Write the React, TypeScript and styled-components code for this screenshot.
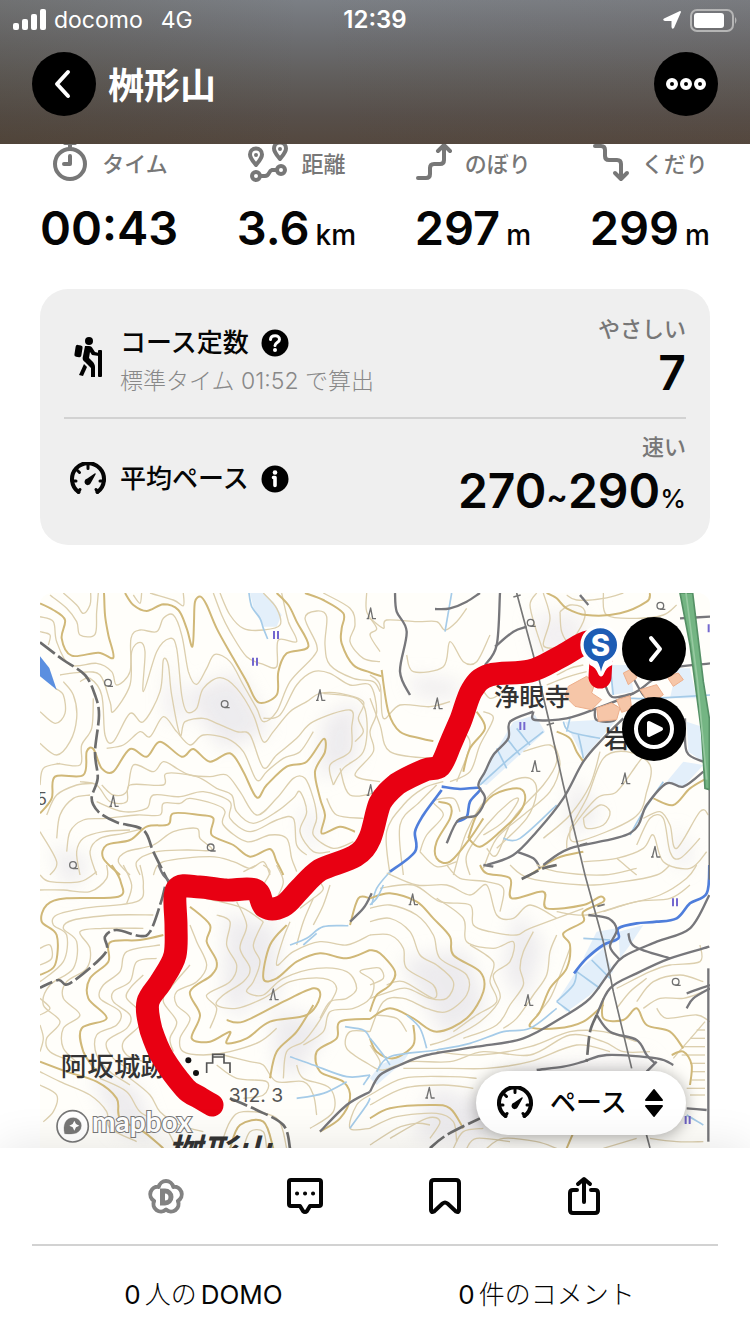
import React from "react";
import styled, { createGlobalStyle } from "styled-components";

const GlobalStyle = createGlobalStyle`
  *, *::before, *::after { box-sizing: border-box; }
  body {
    margin: 0;
    background: #fff;
    color: #050505;
    font-family: Inter, "Noto Sans CJK JP", sans-serif;
  }
  button, select { font: inherit; color: inherit; border: 0; padding: 0; background: none; cursor: pointer; }
  h1, h2, p, dl, dt, dd { margin: 0; font-weight: inherit; }
  svg { display: block; flex: none; }
`;

const Screen = styled.div`
  min-height: 100vh;
  display: flex;
  flex-direction: column;
`;

/* ---------- header ---------- */

const Header = styled.header`
  flex: none;
  height: 144px;
  color: #fff;
  background:
    linear-gradient(90deg, rgba(62, 50, 30, 0.18), rgba(80, 80, 80, 0) 40%, rgba(90, 60, 40, 0.06)),
    linear-gradient(180deg, #7b7f85 0%, #6c6d70 28%, #605d5b 55%, #574f4a 80%, #54483f 100%);
`;

const StatusBar = styled.div`
  height: 40px;
  padding: 0 12px;
  display: grid;
  grid-template-columns: 1fr auto 1fr;
  align-items: center;
  font-size: 23px;
  line-height: 40px;
`;

const StatusGroup = styled.div<{ $end?: boolean }>`
  display: flex;
  align-items: center;
  gap: 8px;
  justify-content: ${(p) => (p.$end ? "flex-end" : "flex-start")};
`;

const Network = styled.span`
  margin-left: 10px;
`;

const Clock = styled.span`
  font-size: 24px;
  font-weight: 600;
`;

const NavBar = styled.nav`
  padding: 12px 32px 0;
  display: flex;
  align-items: center;
  gap: 12px;
`;

const Title = styled.h1`
  flex: 1;
  padding-top: 4px;
  font-size: 36px;
  line-height: 60px;
  font-weight: 700;
`;

const RoundButton = styled.button`
  width: 64px;
  height: 64px;
  flex: none;
  display: grid;
  place-items: center;
  border-radius: 50%;
  background: #000;
  color: #fff;
`;

/* ---------- statistics ---------- */

const Main = styled.main`
  flex: 1;
  padding: 0 40px;
  overflow: hidden;
`;

const Stats = styled.dl`
  display: flex;
  justify-content: space-between;
`;

const Stat = styled.div`
  display: flex;
  flex-direction: column;
  align-items: center;
`;

const StatLabel = styled.dt`
  display: flex;
  align-items: center;
  gap: 12px;
  height: 36px;
  color: #777;
  font-size: 22px;
  font-weight: 500;
`;

const StatValue = styled.dd`
  margin-top: 20px;
  font-size: 47px;
  line-height: 56px;
  font-weight: 600;
  white-space: nowrap;
`;

const Unit = styled.span`
  margin-left: 6px;
  font-size: 28px;
  font-weight: 500;
`;

const Small = styled.span`
  font-size: 26px;
  font-weight: 500;
`;

const Tilde = styled.span`
  font-size: 32px;
`;

/* ---------- course card ---------- */

const Card = styled.section`
  margin-top: 26px;
  padding: 0 24px;
  border-radius: 28px;
  background: #efefef;
`;

const CardRow = styled.div`
  height: 128px;
  padding-top: 8px;
  display: flex;
  align-items: center;
  gap: 8px;

  & + & {
    padding: 0 0 6px;
    border-top: 2px solid #d2d2d2;
  }
`;

const CardIcon = styled.div`
  width: 48px;
  display: grid;
  place-items: center;
`;

const CardText = styled.div<{ $noted?: boolean }>`
  flex: 1;
  padding-top: ${(p) => (p.$noted ? "8px" : 0)};
`;

const CardTitle = styled.h2`
  display: flex;
  align-items: center;
  gap: 12px;
  font-size: 26px;
  line-height: 40px;
  font-weight: 500;
`;

const Note = styled.p`
  color: #888;
  font-size: 23px;
  line-height: 36px;
  font-weight: 300;
`;

const Result = styled.div`
  text-align: right;
`;

const Grade = styled.p`
  color: #777;
  font-size: 22px;
  line-height: 32px;
  font-weight: 500;
`;

const ResultValue = styled.p`
  font-size: 48px;
  line-height: 56px;
  font-weight: 600;
`;

/* ---------- map ---------- */

const MapPanel = styled.section`
  position: relative;
  margin-top: 48px;
  border-radius: 12px 12px 0 0;
  overflow: hidden;
`;

const MapArt = styled.svg`
  width: 100%;
  height: auto;
`;

const MapControls = styled.div`
  position: absolute;
  top: 24px;
  right: 24px;
  display: grid;
  gap: 16px;
`;

const PacePicker = styled.label`
  position: absolute;
  right: 24px;
  bottom: 13px;
  height: 64px;
  padding: 0 22px 0 20px;
  display: flex;
  align-items: center;
  gap: 16px;
  border-radius: 32px;
  background: #fff;
  box-shadow: 0 2px 16px rgba(0, 0, 0, 0.35);
  font-size: 26px;
  font-weight: 500;
`;

const PaceSelect = styled.select`
  appearance: none;
  width: 78px;
  line-height: 40px;
`;

/* ---------- footer ---------- */

const Footer = styled.footer`
  position: relative;
  padding: 0 32px;
  background: #fff;
  box-shadow: 0 -4px 40px rgba(0, 0, 0, 0.09);
`;

const Actions = styled.div`
  height: 96px;
  padding: 0 64px;
  display: grid;
  grid-template-columns: repeat(4, 1fr);
  justify-items: center;
  align-items: center;
`;

const ActionButton = styled.button`
  display: grid;
  place-items: center;
  width: 64px;
  height: 64px;
`;

const Counts = styled.div`
  height: 90px;
  padding-top: 10px;
  display: grid;
  grid-template-columns: 1fr 1fr;
  align-items: center;
  border-top: 2px solid #d2d2d2;
`;

const CountLink = styled.a`
  display: flex;
  justify-content: center;
  gap: 4px;
  color: inherit;
  font-size: 26px;
  line-height: 40px;
  text-decoration: none;
`;

const Japanese = styled.span`
  font-weight: 300;
`;

/* ---------- icons ---------- */

const line = {
  fill: "none",
  stroke: "currentColor",
  strokeLinecap: "round" as const,
  strokeLinejoin: "round" as const,
};

const StopwatchIcon = () => (
  <svg width="40" height="40" viewBox="0 0 40 40" {...line} strokeWidth="4">
    <circle cx="20" cy="22" r="15" />
    <path d="M20 14v8h-6M20 7V3M15 1h10" />
  </svg>
);

const DistanceIcon = () => (
  <svg width="42" height="40" viewBox="0 0 42 40" {...line} strokeWidth="4">
    <path d="M9 23C5 18 3 16 3 12.500a6 6 0 0 1 12 0C15 16 13 18 9 23z" />
    <path d="M33 17C29 12 27 10 27 6.500a6 6 0 0 1 12 0C39 10 37 12 33 17z" />
    <circle cx="9" cy="13" r="1" strokeWidth="2" />
    <circle cx="33" cy="7" r="1" strokeWidth="2" />
    <circle cx="9" cy="34" r="4" />
    <circle cx="34" cy="28" r="4" />
    <path d="M13 34h5c5 0 3-5 7-6h5" />
  </svg>
);

const AscentIcon = () => (
  <svg width="38" height="40" viewBox="0 0 38 40" {...line} strokeWidth="4">
    <path d="M3 36h8q4 0 4-4v-6q0-4 4-4h6q4 0 4-4V4M23 9l6-6 6 6" />
  </svg>
);

const DescentIcon = () => (
  <svg width="38" height="40" viewBox="0 0 38 40" {...line} strokeWidth="4">
    <path d="M3 4h6q4 0 4 4v6q0 4 4 4h8q4 0 4 4v14M23 31l6 6 6-6" />
  </svg>
);

const HikerIcon = () => (
  <svg width="32" height="42" viewBox="0 0 32 42">
    <circle cx="17" cy="5" r="4" />
    <rect x="3" y="9" width="7" height="12" rx="2" transform="rotate(9 6 15)" />
    <path d="M13 10h4c2 0 3 1 4 3l2 3 4 1v3l-7-1-2-3-1 6 4 4c1 1 2 3 2 5v10h-4v-9l-6-6c-2-1-3-3-2-6z" />
    <path d="M12 28l3 3-4 9-4-1z" />
    <rect x="26" y="14" width="4" height="27" rx="1" />
  </svg>
);

const GaugeIcon = () => (
  <svg width="38" height="34" viewBox="0 0 38 34" {...line} strokeWidth="4">
    <path d="M9.500 30A16 16 0 1 1 28.500 30" />
    <path strokeWidth="3" d="M19 3v3.500M8.500 8.500l2 2M3 19h4M35 19h-4M9 30l2-2.500M29 30l-2-2.500" />
    <path fill="currentColor" strokeWidth="1.500" d="M26 12l-8 5.500a2.500 2.500 0 1 0 3 3.500z" />
  </svg>
);

const HelpIcon = () => (
  <svg width="28" height="28" viewBox="0 0 28 28">
    <circle cx="14" cy="14" r="13.500" />
    <path d="M9.500 10.500c.5-5 9-5 9 0 0 3-4.500 3-4.500 6" fill="none" stroke="#fff" strokeWidth="3" strokeLinecap="round" />
    <circle cx="14" cy="21" r="2" fill="#fff" />
  </svg>
);

const InfoIcon = () => (
  <svg width="28" height="28" viewBox="0 0 28 28">
    <circle cx="14" cy="14" r="13.500" />
    <circle cx="14" cy="7.500" r="2.300" fill="#fff" />
    <path d="M12.500 12.500H14v8" fill="none" stroke="#fff" strokeWidth="3.600" strokeLinecap="round" strokeLinejoin="round" />
  </svg>
);

const SortIcon = () => (
  <svg width="20" height="30" viewBox="0 0 20 30" stroke="#000" strokeWidth="2" strokeLinejoin="round">
    <path d="M10 2l8 10H2zM10 28l8-10H2z" />
  </svg>
);

const DomoIcon = () => (
  <svg width="42" height="42" viewBox="0 0 42 42" {...line} stroke="#828282" strokeWidth="4">
    <path d="M13.700 11.900A7.500 7.500 0 0 1 28.300 11.900A7.500 7.500 0 0 1 32.900 25.900A7.500 7.500 0 0 1 21 34.500A7.500 7.500 0 0 1 9.100 25.900A7.500 7.500 0 0 1 13.700 11.900z" />
    <path d="M17.500 16v12h2.500a6 6 0 0 0 0-12z" strokeWidth="5" strokeLinejoin="miter" />
  </svg>
);

const CommentIcon = () => (
  <svg width="42" height="42" viewBox="0 0 42 42" {...line} strokeWidth="4">
    <path d="M7 5h28q2 0 2 2v22q0 2-2 2h-9l-3 5q-2 2-4 0l-3-5H7q-2 0-2-2V7q0-2 2-2z" />
    <path d="M13 18.500h.1M21 18.500h.1M29 18.500h.1" />
  </svg>
);

const BookmarkIcon = () => (
  <svg width="42" height="42" viewBox="0 0 42 42" {...line} strokeWidth="4">
    <path d="M10 5h22q3 0 3 3v27q0 3-3 1.500l-8.500-8q-2.500-2-5 0L10 36.500q-3 1.500-3-1.500V8q0-3 3-3z" />
  </svg>
);

const ShareIcon = () => (
  <svg width="42" height="42" viewBox="0 0 42 42" {...line} strokeWidth="4">
    <path d="M14 15h-4q-3 0-3 3v17q0 3 3 3h22q3 0 3-3V18q0-3-3-3h-4M21 27V5M15 9l6-5 6 5" />
  </svg>
);

/* ---------- map drawing ---------- */

/** Smooth line through a list of "x,y" points. */
function curve(points: string): string {
  const p = points.split(" ").map((s) => s.split(",").map(Number));
  let d = `M${p[0][0]} ${p[0][1]}`;
  for (let i = 0; i < p.length - 1; i++) {
    const a = p[i - 1] || p[i];
    const b = p[i];
    const c = p[i + 1];
    const e = p[i + 2] || c;
    const n = (v: number) => Math.round(v);
    d += `C${n(b[0] + (c[0] - a[0]) / 6)} ${n(b[1] + (c[1] - a[1]) / 6)} ${n(c[0] - (e[0] - b[0]) / 6)} ${n(c[1] - (e[1] - b[1]) / 6)} ${c[0]} ${c[1]}`;
  }
  return d;
}

type Sheet = {
  x: number;
  y: number;
  index: string[];
  contours: string[];
  roads?: string[];
  trails?: string[];
  streams?: string[];
  rivers?: string[];
  fields?: string[];
  conifers?: number[][];
  broadleaf?: number[][];
  paddies?: number[][];
};

const sheets: Sheet[] = [
  {
    x: -30, y: -24,
    index: [
      "30,55 70,75 105,105 95,160 125,212 205,203 250,218 235,150 225,90 222,24",
      "285,24 310,60 350,78 400,58 445,75 470,130 487,185 492,110 495,50 512,35 530,60 560,130 610,220 650,290 685,352 740,330 745,260 770,205 835,185 800,110 775,60 740,24",
      "825,24 880,45 940,85 935,130 935,175 970,240 1020,262 1055,274",
      "30,685 65,640 75,575 160,570 170,500 190,492 215,550 250,560 300,492 350,515 390,470 455,515 490,492 540,530 600,505 640,560 680,637 710,600 770,545 830,530 880,462 885,500 855,560 870,640 885,690 875,745 930,725 975,740",
      "270,870 220,820 230,780 300,765 350,725 415,718 430,685 510,690 550,700 545,750 610,780 660,815 720,792 740,830 760,870",
    ],
    contours: [
      "100,24 140,60 160,85 180,60 182,24",
      "60,30 110,70 140,110 150,150 195,148 200,80 205,24",
      "30,95 70,110 80,170 120,240 200,235 245,260 260,300 300,260 303,160 330,135 380,140 400,100 430,90 455,150 475,260 500,298 530,250 555,208 600,230 640,300 680,370 700,410 740,380 780,290 850,215 860,180 825,100 860,78 890,95 885,180 900,240 970,280 1030,290 1050,320",
      "310,30 330,55 335,24",
      "360,24 430,45 460,62 460,24",
      "550,24 575,90 600,140 650,215 700,238 740,245 745,165 800,170 775,110 755,24",
      "570,24 600,90 640,130 700,135 750,120 740,70 700,24",
      "90,270 150,262 210,270 240,350 250,380 300,300 305,200 330,172 345,200 340,320 380,200 420,160 440,190 455,330 470,380 500,370 520,310 570,278 620,310 670,390 700,470 730,440 780,380 830,350 870,325 930,325 1000,350 985,400 1000,440 975,470",
      "150,290 180,280 215,330 225,450 250,470 300,385 340,410 390,320 400,225 415,240 425,330 450,450 465,410 520,400 560,415 620,440 660,450 700,548 740,510 800,460 850,410 960,375 965,430 960,500 900,540 910,600",
      "30,380 75,415 105,385 100,330 75,310",
      "30,475 80,510 120,470 140,400 130,330 100,290",
      "80,535 150,540 155,480 185,430 190,340",
      "230,490 280,480 330,440 360,455 400,395 440,440 480,480 520,450 590,460 640,500 680,585 710,560 760,520 810,500 850,440",
      "30,600 40,550 90,535",
      "215,600 250,630 290,620 310,540 370,560 400,530 440,550 480,570 540,575 590,570 630,620 680,690 740,640 790,580 825,580 850,640 860,700 850,750 910,790 970,770",
      "150,590 200,600 240,650 290,650 300,600 400,600 410,565 500,575 560,610 605,630 620,680 670,715 740,680 790,640 810,620 830,680 810,740 850,800 900,800",
      "200,650 280,680 350,670 370,630 450,635 520,620 600,650 600,700 660,740 740,705 790,700 800,780 830,810",
      "50,690 80,630 140,600 190,595",
      "80,760 90,690 130,640 180,630",
      "110,800 120,740 160,705 230,700 320,690 390,690 400,655 450,655 480,640 560,660 585,680 580,720 650,770 720,750 770,760 785,820 800,860",
      "150,870 140,800 160,760 220,740 300,735",
      "200,870 180,800 210,760 280,745 340,730",
      "300,870 265,830 290,800 370,780 430,740 500,730 510,760 545,795 470,795 380,800 320,830 330,870",
      "370,870 400,830 540,815 610,830 660,850 700,830 720,870",
      "30,740 80,830 60,870",
      "1010,24 1010,80 1040,130 1020,150 1050,200",
      "880,24 960,70 975,120 960,170 1000,220 1050,230",
      "700,400 750,390 800,300 850,260 900,265 960,300 1020,300 1040,380 1020,440 1030,500 975,570 1050,590",
      "910,600 940,550 1000,500 1010,400 980,340 880,325",
      "930,550 960,630 1050,620",
      "890,640 920,690 1000,700",
      "30,140 60,150 55,180",
    ],
    trails: ["30,172 100,225 165,270 195,330 207,390 195,500 203,580 185,640 205,680 260,712 340,735 370,800 420,900"],
    conifers: [[870, 330], [1022, 85], [250, 648], [1022, 615]],
    broadleaf: [[235, 293], [585, 357], [543, 787], [130, 840]],
    paddies: [[738, 150], [675, 230]],
    streams: ["657,24 665,65 690,100 700,130 713,162"],
    fields: ["660,24 672,75 700,125 740,125 755,90 730,50 700,24"],
  },
  {
    x: 990, y: -24,
    index: [
      "35,255 55,380 90,440 150,460 190,468",
      "205,650 240,660 240,700 200,770 200,820 240,830 300,760 340,700",
      "295,760 320,690 370,630 440,610 465,630 450,680 390,740 330,785 295,760",
      "320,380 345,430 300,490 280,560",
      "530,24 560,40 590,70 650,90 750,85 830,50 840,24",
      "850,640 910,660 960,610 1010,580",
      "560,440 600,460 620,500 640,530",
      "480,870 560,820 640,800",
    ],
    contours: [
      "0,100 40,130 50,105 140,110 200,110 225,135 260,110 290,70",
      "110,210 130,260 220,245 240,170 280,230 320,230 360,150",
      "0,270 30,300 40,400 90,360 180,365 240,350",
      "0,340 30,420 60,500 180,520",
      "500,24 480,60 500,140 520,200",
      "520,24 540,100 520,180 560,190",
      "570,80 600,60 640,70 640,110 600,170 575,140 570,80",
      "590,30 620,45 700,40 760,24",
      "700,24 710,90 800,100 880,90 920,60",
      "460,500 540,480 560,530 520,600 430,700 380,810 350,790",
      "250,870 290,740 350,640 420,590 480,580 500,620 470,700 380,790",
      "590,790 600,740 680,640 740,620 800,540 830,500",
      "600,730 650,640 700,520 770,500 840,540 830,620 790,700 620,770 600,730",
      "640,700 690,660 720,680 700,720 650,730 640,700",
      "820,700 870,680 900,720 920,790 990,680 1015,690",
      "800,780 840,700 880,700 900,800 930,820 990,760",
      "640,830 740,820 820,790 850,750 880,830 960,850 1010,800",
      "60,870 50,740 100,660 160,610 220,590",
      "100,870 90,720 150,650 200,600",
      "150,800 170,750 220,690 190,650 250,640 270,680",
      "150,800 200,845 260,830",
      "340,380 370,400 330,480 300,560 240,590",
      "280,440 300,480 260,590",
      "340,850 380,760 460,690 540,620 570,540 550,470",
      "520,760 600,690 660,600 690,500",
      "330,300 360,340 400,320",
      "560,270 600,250 640,240",
      "530,300 580,280 650,260",
      "740,820 800,870",
      "300,870 290,810 350,720 420,650 445,645 400,710 340,750",
    ],
    roads: [
      "75,24 80,80 110,140 90,260 120,330",
      "195,72 240,70 290,50 330,24",
      "390,24 380,180 345,240",
      "375,185 430,140 470,125",
      "350,840 430,810 500,740 580,640 640,530 700,460 760,400",
      "490,380 495,405 590,400 680,370 790,325 840,290 900,250 1020,235",
      "520,840 600,790 780,745 830,660 890,595 940,605 1000,560",
      "490,380 420,410 415,460 370,510 345,560 325,600 345,640 320,690 265,705 230,775",
      "700,280 725,335 790,325",
      "790,280 820,330 850,350",
      "675,370 680,405 735,405 735,360",
      "630,30 655,60",
      "930,100 1020,95",
      "945,400 950,500 1000,530",
      "440,800 490,820 510,850",
    ],
    streams: [
      "330,600 430,510 520,440", "380,490 410,550", "410,460 450,510", "440,430 480,480",
      "580,410 600,440 690,460", "625,450 640,520", "560,660 450,760 400,760",
      "245,24 225,140", "880,590 820,680 780,750", "600,400 590,440", "780,340 850,340 1020,330",
      "720,240 730,330", "60,860 20,910 5,960",
    ],
    rivers: ["215,615 160,690 135,740 135,800 60,860", "215,605 270,612 330,610 300,650 290,695 260,710"],
    fields: [
      "430,410 495,390 525,440 350,600 325,595 370,510",
      "585,410 680,405 735,410 700,450 640,520 600,440",
      "890,590 940,530 1000,540 940,605", "720,240 780,240 790,320 725,330",
      "950,410 1010,430 1000,530 955,500",
      "920,250 960,250 980,340 900,340",
    ],
    conifers: [[202, 355], [495, 543], [765, 580], [855, 800]],
    broadleaf: [[483, 113], [872, 62]],
    paddies: [[457, 423], [1022, 130]],
  },
  {
    x: -30, y: 816,
    index: [
      "245,0 272,50 265,95 110,100 50,120 35,170 80,210 75,300 30,330",
      "400,210 330,225 240,232 235,290 180,340 175,400 230,460 155,490 160,560 200,620",
      "480,125 540,180 530,230 560,290 545,330 480,380 510,450 485,520 540,530 600,500 590,535 650,520 720,470 830,450 870,395 850,370 760,410 640,470 590,465",
      "770,180 720,240 700,340 740,340 800,290 870,265 950,280 1020,255",
      "1020,462 930,470 920,520 860,560 870,620 940,650 960,700 930,760 870,800",
      "720,640 740,560 800,500 850,420",
      "960,180 985,100 1020,100",
      "30,590 110,620 200,650 260,700 270,760 340,800 400,850",
      "600,850 630,780 700,770 730,850",
    ],
    contours: [
      "30,30 60,50 150,50 200,20",
      "30,75 100,75 180,80 230,40 230,0",
      "330,0 340,60 320,110 160,130 80,150 70,180 110,210 100,290 30,350",
      "280,0 305,60 290,115",
      "370,150 250,150 130,165 100,190 140,230 130,310 60,360 40,420 90,470 50,520 60,560 130,590",
      "340,190 220,190 150,200 180,250 170,310 110,350 100,400 150,450 100,490 100,550 150,600",
      "30,250 60,240 65,280 30,300",
      "390,240 290,260 270,320 220,360 210,400 270,440 260,480 200,510 200,570 240,620 300,660",
      "380,280 320,290 300,350 250,380 250,410 300,450 290,490 230,530 250,580 310,620",
      "340,330 300,370 290,400 330,440 330,480 280,530 290,570 340,590",
      "480,180 500,230 530,300 500,350 440,380 440,420 480,460 450,520 460,560 520,570 600,560 690,530 740,490",
      "480,300 420,370 400,410 440,470 420,520 430,560",
      "560,150 600,170 590,240 620,300 600,350 530,390 560,430 540,490",
      "620,110 650,180 630,250 660,310 640,350 580,390 560,420 620,430 700,400 780,350 880,340 920,370 890,430 860,480 820,530 770,560 760,640",
      "700,170 670,240 690,290 670,350 650,380 700,390 760,340 860,310 950,320 980,370 950,400 900,410 870,460",
      "780,170 760,220 740,300 790,260 870,230 950,240 1020,210",
      "850,100 820,170 800,240",
      "900,60 880,120 850,180",
      "1020,310 990,320 1030,350 1020,400 970,430 900,440 880,500 820,540",
      "1020,500 960,500 950,550 1020,600",
      "560,600 620,640 710,650 700,690 640,700",
      "580,570 660,590 700,600 740,650 820,650 850,690 860,750",
      "800,600 820,640 900,670 910,740 840,790",
      "30,620 90,650 180,690 230,740 240,790 320,830",
      "30,660 80,690 70,740 40,770",
      "210,640 290,680 330,740 400,780 440,850",
      "300,640 360,690 390,740 450,780 520,800",
      "640,850 660,800 700,800 710,850",
      "570,850 600,770 640,740 740,760 770,850",
      "850,30 880,70 850,100 810,130",
      "740,100 760,50 740,0", "700,60 720,20 700,0", "640,20 680,0",
      "1020,690 980,720 960,790 1020,790",
      "480,90 570,110 640,130 700,170",
      "30,480 40,520 30,560",
      "30,400 60,430 30,450",
    ],
    roads: ["385,0 400,30 420,50", "960,170 1000,130 1025,85", "870,800 950,720 1020,680"],
    trails: ["405,65 390,120 360,200 330,213 260,195 225,215 225,265 120,355 85,345 30,368", "600,700 680,735 760,780 780,850"],
    streams: [
      "780,240 830,220 880,185 955,182", "945,485 1000,495 1020,520", "780,575 850,600 950,635 1020,630",
      "800,700 880,685 950,650", "960,790 1010,720 1020,700", "1000,660 1020,630", "820,240 860,205",
    ],
    conifers: [[730, 388]],
    broadleaf: [],
    paddies: [],
  },
  {
    x: 990, y: 816,
    index: [
      "0,100 60,85 140,110 190,160 240,215 250,270 330,320 340,380 290,460 200,500 130,460 60,430 0,462",
      "0,255 30,265 75,320 60,360 20,390 0,440",
      "330,0 350,25 420,40 425,100 520,80 530,130 640,120 690,95 700,110 640,140 640,170 580,205 600,240 590,310 540,370 510,440 480,485 560,490 640,470 700,420",
      "700,400 700,460 760,465 800,430 830,480 900,500 940,550",
      "0,760 60,730 180,720 240,730 280,790",
      "130,480 130,540 70,580 20,560 0,520",
      "905,570 940,560 965,600 960,660",
      "590,850 620,780",
    ],
    contours: [
      "50,24 140,60 230,60 300,90 350,60 380,150 430,160 480,120 560,160",
      "30,70 130,60 210,110 300,120 310,180 360,200 440,210 480,190 640,130",
      "0,130 60,120 140,150 190,210 210,280 290,330 290,390 230,440 170,430 100,400 40,410 0,500",
      "0,170 60,160 120,200 150,270 200,300 250,350 230,400 180,400 110,370 60,380 0,400",
      "0,210 60,210 100,250 110,310 190,360 190,400 100,350 50,360",
      "0,310 30,310 40,340 0,360",
      "200,100 280,160 290,230 370,250 430,230 420,290 370,330 390,400 330,470 240,520 180,540",
      "300,240 370,290 360,350 380,410 320,450 250,500",
      "490,200 460,260 450,310 460,360 420,420 380,480 280,520",
      "560,210 540,260 530,330 490,390 440,460 400,490",
      "230,0 270,40 350,50 400,70 390,140",
      "420,0 480,40 640,60 760,50 860,30 900,0",
      "500,0 560,20 700,30 800,10",
      "560,140 650,150 760,120 870,90 950,40 980,0",
      "700,140 800,110 900,100 960,60",
      "0,600 40,615 120,590 240,590 340,560 480,570 600,510 700,530 760,560 840,560",
      "100,610 240,610 350,610 480,590 620,540 720,560",
      "200,560 330,570 480,545 600,500 700,500 800,530",
      "0,690 100,640 240,635 320,640",
      "0,720 100,670 220,660 310,670",
      "0,790 80,755 200,745 250,770 260,830",
      "60,820 170,760 210,770 180,820",
      "0,840 80,790 140,775 180,780",
      "250,850 280,800 340,790",
      "290,850 320,820 420,830", "350,850 400,820 500,830 560,850",
      "740,370 840,320 900,300 990,290 990,240",
      "800,410 850,350 930,330 1000,350",
      "820,430 870,400 940,400 1000,380",
      "740,430 780,380 830,340",
      "860,430 890,460 980,450 1020,470",
      "600,250 570,330 540,400 500,450",
      "840,820 920,830 1000,830", "700,850 800,820",
      "20,450 80,460 110,500", "0,540 30,590 20,620",
      "940,545 1005,545", "935,570 1005,570", "960,595 1005,595", "965,620 1005,620", "965,645 1005,645", "950,670 1005,670", "960,690 1005,690", "960,520 1005,520", "980,495 1005,495",
      "1005,470 940,545 910,580",
    ],
    roads: [
      "0,680 30,630 90,600 170,570 320,545 460,520 580,455 660,400 720,320 760,275 860,230 960,190 1018,90",
      "680,450 720,370 800,325 900,280 1018,245",
      "655,150 715,160 740,195 720,245 750,285", "775,205 795,245 900,280",
      "680,450 720,500 800,525 830,570 855,595", "1015,310 1015,830", "950,385 1020,360", "950,430 970,400 1020,370",
      "500,615 580,605 640,590 710,570 860,580 910,600", "950,730 1010,735", "860,590 830,620",
      "340,0 370,5",
    ],
    trails: ["455,42 520,10 560,0", "680,450 660,500 650,590", "180,850 230,810 330,760"],
    streams: [
      "20,620 60,575 200,555 300,535 400,500 480,490 560,430", "620,320 690,370", "665,285 720,340",
      "560,410 600,440", "40,60 20,100 0,120", "110,450 150,490 170,550", "0,520 40,570 60,600",
      "640,220 720,225", "620,320 610,360 560,410", "950,750 1000,780",
    ],
    rivers: ["612,325 650,280 700,240 745,220 745,190 800,175 860,170 920,160 960,115 1010,85 1018,0"],
    fields: ["615,325 700,250 730,320 660,390 590,440 560,410", "680,200 740,190 740,230 640,280", "745,200 820,180 780,240 750,280", "0,640 30,600 120,560 100,590 20,660"],
    conifers: [[128, 103], [474, 405], [178, 683]],
    broadleaf: [[918, 350]],
    paddies: [[915, 112], [953, 765]],
  },
];

const track =
  "600,677 600,650 588,642 560,657 530,671 490,675 472,690 460,722 450,745 440,766 425,770 397,784 380,803 370,838 355,856 320,870 300,889 283,906 265,907 255,890 225,890 200,887 177,889 176,925 175,955 162,980 148,1002 151,1030 163,1058 185,1088 200,1098 212,1105";

const SheetDrawing = ({ sheet }: { sheet: Sheet }) => (
  <g transform={`translate(${sheet.x} ${sheet.y})`} fill="none" strokeLinejoin="round">
    {(sheet.fields || []).map((p, i) => <polygon key={i} points={p} fill="#e3effa" />)}
    <g stroke="#dccfae" strokeWidth="4">{sheet.contours.map((p, i) => <path key={i} d={curve(p)} />)}</g>
    <g stroke="#d0b878" strokeWidth="6">{sheet.index.map((p, i) => <path key={i} d={curve(p)} />)}</g>
    <g stroke="#a5cbe8" strokeWidth="5">{(sheet.streams || []).map((p, i) => <path key={i} d={curve(p)} />)}</g>
    <g stroke="#4f7edb" strokeWidth="8">{(sheet.rivers || []).map((p, i) => <path key={i} d={curve(p)} />)}</g>
    <g stroke="#77777b" strokeWidth="7">{(sheet.roads || []).map((p, i) => <path key={i} d={curve(p)} />)}</g>
    <g stroke="#6c6c6c" strokeWidth="8" strokeDasharray="56 12">{(sheet.trails || []).map((p, i) => <path key={i} d={curve(p)} />)}</g>
    <g stroke="#707070" strokeWidth="4">
      {(sheet.conifers || []).map(([x, y], i) => <path key={i} d={`M${x - 8} ${y + 16}L${x} ${y - 16}L${x + 6} ${y + 16}h10M${x - 12} ${y + 16}h8`} />)}
      {(sheet.broadleaf || []).map(([x, y], i) => <path key={i} d={`M${x - 11} ${y}a10 10 0 1 1 20 0a10 10 0 1 1 -20 0M${x - 2} ${y + 11}h16`} />)}
    </g>
    <g stroke="#7468cf" strokeWidth="6">
      {(sheet.paddies || []).map(([x, y], i) => <path key={i} d={`M${x - 6} ${y - 12}v24M${x + 6} ${y - 12}v24`} />)}
    </g>
  </g>
);

const TrailMap = () => (
  <MapArt viewBox="0 0 2010 1665" role="img" aria-label="桝形山のルート地図">
    <defs>
      <filter id="relief" x="-20%" y="-20%" width="140%" height="140%"><feGaussianBlur stdDeviation="28" /></filter>
    </defs>
    <rect width="2010" height="1665" fill="#fffefa" />
    <g fill="#dedce4" opacity="0.55" filter="url(#relief)">
      <path d="M430 300l160-60 100 170-140 60zM850 380l100-60 0 180-110 60zM380 190l60 200-60-20zM30 760l120 40-60 100zM560 960l120 40-70 280-60-60zM640 1050l60-90 20 230-60 60z" />
      <path d="M1080 1100l200-30 60 180-120 90zM700 1250l170 40-100 160-60-20zM1430 950l80 110-60 180-60-110zM1180 1480l200 60-60 120-200-30zM150 1440l140 40 60 170-120-40z" />
      <path d="M1100 250l160 20 0 40-120 0zM1600 550l80 120-100 60zM1900 700l60 80-40 60zM780 650l60 20-20 130z" />
      <path d="M1400 1420l420-30 30 60-400 30zM1470 70l150-20 20 120-140 30z" opacity="0.7" />
    </g>
    {sheets.map((s, i) => <SheetDrawing key={i} sheet={s} />)}

    {/* pond, houses and the power line */}
    <path d="M0 190L28 225L50 290L0 250z" fill="#5b8fe0" />
    <g fill="#f6c6a8" stroke="#eeaf8b" strokeWidth="3">
      <path d="M1585 280l55-30 25 20-10 30 30 20-30 30-50-10-30-30zM1670 345l45-15 25 15-10 35-55 5zM1730 320l40-12 5 40-30 10zM1800 290l50-15 20 30-40 30zM1880 250l35-10 15 20-30 20zM1750 240l30-15 10 30-25 20z" />
    </g>
    <path d="M1430 0L1480 186L1530 396L1570 576L1635 846L1690 1046L1720 1196L1775 1426M1818 1620L1830 1665" fill="none" stroke="#777" strokeWidth="5" />
    <path d="M1420 12l22-6M1520 396l22-6M1620 756l22-6M1672 940l22-6" stroke="#777" strokeWidth="5" />

    {/* expressway */}
    <path d="M1920 0H1958L1990 266L2008 376V590L1995 586L1985 420L1950 156z" fill="#74b583" stroke="#559065" strokeWidth="5" />
    <path d="M1938 0L1972 260L2000 560" fill="none" stroke="#96c9a0" strokeWidth="5" />
    <path d="M2008 590V860" stroke="#777" strokeWidth="5" />

    {/* place names */}
    <g fontFamily='"Noto Sans CJK JP", sans-serif' fill="#333" fontWeight="500">
      <text x="1362" y="340" fontSize="76">浄眼寺</text>
      <text x="1692" y="466" fontSize="76">岩</text>
      <text x="62" y="1450" fontSize="80">阿坂城跡</text>
      <text x="380" y="1712" fontSize="104" fontWeight="700" fontStyle="italic">桝形山</text>
    </g>
    <g fontFamily="Inter, sans-serif" fill="#555">
      <text x="566" y="1526" fontSize="58">312. 3</text>
      <text x="-10" y="636" fontSize="50">5</text>
    </g>
    <g fill="#111"><circle cx="445" cy="1402" r="9" /><circle cx="468" cy="1440" r="9" /></g>
    <path d="M500 1440v-30h18v-18h34v18h18v30M518 1410v-18M552 1392v-8h-34v8" fill="none" stroke="#555" strokeWidth="5" />

    {/* walked route */}
    <path d={curve(track)} transform="translate(-120 -1779) scale(3)" fill="none" stroke="#e80012" strokeWidth="23" strokeLinecap="round" strokeLinejoin="round" />

    {/* start pin */}
    <g transform="translate(1681 156)">
      <path d="M-26 54Q-8 60 2 86Q12 60 30 54z" fill="#1d5cb4" stroke="#fff" strokeWidth="16" strokeLinejoin="round" />
      <circle r="55" fill="#1d5cb4" stroke="#fff" strokeWidth="10" />
      <path d="M-14 44Q-3 52 2 80Q8 52 18 44z" fill="#1d5cb4" />
      <text y="32" textAnchor="middle" fontFamily="Inter, sans-serif" fontSize="88" fontWeight="800" fill="#fff">S</text>
    </g>

    {/* attribution */}
    <g stroke="#777" fill="#fff">
      <circle cx="98" cy="1600" r="47" strokeWidth="5" />
      <path d="M74 1622c-6-26 2-48 26-48a24 24 0 0 1 0 48q-14 2-26 0z" fill="#777" />
      <path d="M103 1583l5 10 10 5-10 5-5 10-5-10-10-5 10-5z" stroke="none" />
      <text x="156" y="1618" fontFamily="Lato, sans-serif" fontSize="84" fontWeight="700" strokeWidth="6" paintOrder="stroke">mapbox</text>
    </g>
  </MapArt>
);

/* ---------- page ---------- */

const stats = [
  { label: "タイム", value: "00:43", unit: "", Icon: StopwatchIcon },
  { label: "距離", value: "3.6", unit: "km", Icon: DistanceIcon },
  { label: "のぼり", value: "297", unit: "m", Icon: AscentIcon },
  { label: "くだり", value: "299", unit: "m", Icon: DescentIcon },
];

const actions = [
  { label: "DOMOを送る", Icon: DomoIcon },
  { label: "コメント", Icon: CommentIcon },
  { label: "保存", Icon: BookmarkIcon },
  { label: "共有", Icon: ShareIcon },
];

export default function App() {
  return (
    <Screen>
      <GlobalStyle />
      <Header>
        <StatusBar>
          <StatusGroup>
            <svg width="34" height="22" viewBox="0 0 34 22" fill="#fff">
              <rect x="1" y="14" width="6" height="7" rx="2" />
              <rect x="10" y="10" width="6" height="11" rx="2" />
              <rect x="19" y="5" width="6" height="16" rx="2" />
              <rect x="28" y="0" width="6" height="21" rx="2" />
            </svg>
            <span>docomo</span>
            <Network>4G</Network>
          </StatusGroup>
          <Clock>12:39</Clock>
          <StatusGroup $end>
            <svg width="20" height="20" viewBox="0 0 20 20" fill="#fff">
              <path d="M18 1Q19 1 19 2L12 18Q10 20 9.500 17V11H3Q0 10 2 8.500z" />
            </svg>
            <svg width="48" height="24" viewBox="0 0 48 24">
              <rect x="1" y="2" width="42" height="21" rx="6" fill="none" stroke="#b5b5b5" strokeWidth="2" />
              <rect x="4" y="5" width="30" height="15" rx="3" fill="#fff" />
              <path d="M45 9q3 3 0 7z" fill="#b5b5b5" />
            </svg>
          </StatusGroup>
        </StatusBar>
        <NavBar>
          <RoundButton aria-label="戻る">
            <svg width="32" height="32" viewBox="0 0 32 32" {...line} strokeWidth="4"><path d="M20 4L9 16l11 12" /></svg>
          </RoundButton>
          <Title>桝形山</Title>
          <RoundButton aria-label="メニュー">
            <svg width="42" height="14" viewBox="0 0 42 14" {...line} strokeWidth="4">
              <circle cx="7" cy="7" r="4" /><circle cx="21" cy="7" r="4" /><circle cx="35" cy="7" r="4" />
            </svg>
          </RoundButton>
        </NavBar>
      </Header>

      <Main>
        <Stats>
          {stats.map(({ label, value, unit, Icon }) => (
            <Stat key={label}>
              <StatLabel><Icon />{label}</StatLabel>
              <StatValue>{value}{unit && <Unit>{unit}</Unit>}</StatValue>
            </Stat>
          ))}
        </Stats>

        <Card>
          <CardRow>
            <CardIcon><HikerIcon /></CardIcon>
            <CardText $noted>
              <CardTitle>コース定数<HelpIcon /></CardTitle>
              <Note>標準タイム 01:52 で算出</Note>
            </CardText>
            <Result>
              <Grade>やさしい</Grade>
              <ResultValue>7</ResultValue>
            </Result>
          </CardRow>
          <CardRow>
            <CardIcon><GaugeIcon /></CardIcon>
            <CardText>
              <CardTitle>平均ペース<InfoIcon /></CardTitle>
            </CardText>
            <Result>
              <Grade>速い</Grade>
              <ResultValue>270<Tilde>~</Tilde>290<Small>%</Small></ResultValue>
            </Result>
          </CardRow>
        </Card>

        <MapPanel>
          <TrailMap />
          <MapControls>
            <RoundButton aria-label="次へ">
              <svg width="32" height="32" viewBox="0 0 32 32" {...line} strokeWidth="4"><path d="M13 5l9 11-9 11" /></svg>
            </RoundButton>
            <RoundButton aria-label="再生">
              <svg width="42" height="42" viewBox="0 0 42 42" {...line} strokeWidth="4">
                <circle cx="21" cy="21" r="18" />
                <path d="M16 15v12l12-6z" fill="currentColor" />
              </svg>
            </RoundButton>
          </MapControls>
          <PacePicker>
            <GaugeIcon />
            <PaceSelect aria-label="表示項目" defaultValue="pace">
              <option value="pace">ペース</option>
            </PaceSelect>
            <SortIcon />
          </PacePicker>
        </MapPanel>
      </Main>

      <Footer>
        <Actions>
          {actions.map(({ label, Icon }) => (
            <ActionButton key={label} aria-label={label}><Icon /></ActionButton>
          ))}
        </Actions>
        <Counts>
          <CountLink href="#domo"><span>0</span><Japanese>人の</Japanese><span>DOMO</span></CountLink>
          <CountLink href="#comments"><span>0</span><Japanese>件のコメント</Japanese></CountLink>
        </Counts>
      </Footer>
    </Screen>
  );
}
